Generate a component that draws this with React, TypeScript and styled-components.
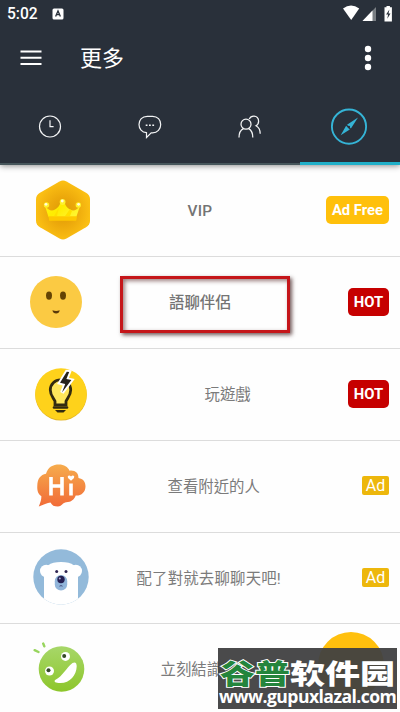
import React from 'react';
import styled, { createGlobalStyle } from 'styled-components';

const GlobalStyle = createGlobalStyle`
  * { box-sizing: border-box; }
  html, body { margin: 0; padding: 0; background: #fff; }
  body { font-family: Roboto, "Noto Sans CJK TC", sans-serif; overflow: hidden; }
  svg { display: block; }
`;

const Screen = styled.div`
  position: relative;
  width: 400px;
  height: 712px;
  overflow: hidden;
  display: flex;
  flex-direction: column;
  background: #fefefe;
`;

const Header = styled.header`
  flex: none;
  height: 165px;
  display: flex;
  flex-direction: column;
  background: #29303a;
  color: #fff;
  box-shadow: 0 1px 6px rgba(0, 0, 0, 0.45);
  z-index: 1;
`;

const StatusBar = styled.div`
  height: 28px;
  display: flex;
  align-items: center;
  padding: 0 6px 0 7px;
`;

const Time = styled.span`
  width: 45px;
  font-size: 15.6px;
  line-height: 28px;
  font-weight: 500;
`;

const StatusIcons = styled.div`
  margin-left: auto;
  display: flex;
`;

const Toolbar = styled.div`
  height: 61px;
  display: flex;
  align-items: center;
  padding: 0 28px 2px 20px;
`;

const Title = styled.h1`
  margin: -3px auto 0 38px;
  font: 400 22px/32px "Noto Sans CJK TC", sans-serif;
`;

const Tabs = styled.nav`
  flex: 1;
  display: grid;
  grid-template-columns: repeat(4, 1fr);
`;

const Tab = styled.button<{ $active?: boolean }>`
  border: 0;
  padding: ${p => (p.$active ? '2px 2px 0 0' : '1px 1px 0 0')};
  background: none;
  display: flex;
  align-items: center;
  justify-content: center;
  border-bottom: ${p => (p.$active ? '3px solid #20afc8' : '2px solid #46565b')};
`;

const List = styled.main`
  flex: 1;
`;

const Row = styled.div<{ $last?: boolean }>`
  height: ${p => (p.$last ? 91 : 92)}px;
  display: grid;
  grid-template-columns: 120px 1fr 90px;
  align-items: center;
  border-bottom: 1px solid #dcdcdc;
`;

const IconCell = styled.div<{ $inset: number; $lift?: number }>`
  padding-left: ${p => p.$inset}px;
  padding-bottom: ${p => p.$lift ?? 0}px;
`;

const Label = styled.span<{ $start: number; $bold?: boolean; $tracking?: number }>`
  padding-left: ${p => p.$start}px;
  padding-top: 1px;
  font-size: 15.4px;
  line-height: 24px;
  font-weight: ${p => (p.$bold ? 500 : 400)};
  letter-spacing: ${p => p.$tracking ?? 0}px;
  color: ${p => (p.$bold ? '#747474' : '#7b7b7b')};
  white-space: nowrap;
`;

const BadgeCell = styled.div`
  display: flex;
  justify-content: flex-end;
  padding-right: 11px;
`;

const Badge = styled.span<{ $tone: 'gold' | 'red' | 'ad' }>`
  height: ${p => (p.$tone === 'ad' ? 19 : 28)}px;
  width: ${p => ({ gold: 63, red: 41, ad: 27 })[p.$tone]}px;
  margin-bottom: 2px;
  display: flex;
  align-items: center;
  justify-content: center;
  border-radius: ${p => (p.$tone === 'ad' ? 2 : 5)}px;
  background: ${p => ({ gold: '#ffc00b', red: '#c60000', ad: '#edb70c' })[p.$tone]};
  color: #fff;
  font-size: ${p => (p.$tone === 'ad' ? 16 : 14.8)}px;
  font-weight: ${p => (p.$tone === 'ad' ? 400 : 700)};
  white-space: nowrap;
`;

const Highlight = styled.div`
  position: absolute;
  left: 120px;
  top: 276px;
  width: 170px;
  height: 57px;
  border: 3px solid #c5161a;
  box-shadow: 2px 2px 4px rgba(40, 0, 0, 0.65), inset 2px 2px 4px rgba(60, 0, 0, 0.5);
`;

const Fab = styled.div`
  position: absolute;
  left: 318px;
  top: 632px;
  width: 66px;
  height: 66px;
  border-radius: 50%;
  background: #ffc00e;
`;

const Watermark = styled.div`
  position: absolute;
  left: 218px;
  top: 648px;
  width: 179px;
  height: 61px;
  background: rgba(64, 64, 65, 0.95);
  color: #fff;
  z-index: 2;
`;

const Brand = styled.div`
  height: 38px;
  padding: 2px 0 0 2px;
  display: flex;
  font: 900 35px/36px "Noto Sans CJK SC", sans-serif;
  white-space: nowrap;
  transform: scaleY(0.79);
  transform-origin: 0 100%;
`;

const BrandGreen = styled.span`
  color: #24853c;
  -webkit-text-stroke: 2.4px #fff;
  paint-order: stroke fill;
`;

const BrandWhite = styled.span`
  color: #fff;
`;

const Url = styled.div`
  font: 700 17.6px/20px "Open Sans", sans-serif;
  padding-left: 1px;
  letter-spacing: -0.56px;
  white-space: nowrap;
`;

const KeyboardIcon = () => (
  <svg width="12" height="12" viewBox="0 0 12 12">
    <rect x="0.5" y="0.5" width="11" height="11" rx="1.5" fill="#fff" />
    <path d="M3.6 8.6 6 2.9l2.4 5.7M4.5 6.7h3" fill="none" stroke="#29303a" strokeWidth="1.3" />
  </svg>
);

const SystemIcons = () => (
  <svg width="52" height="18" viewBox="0 0 52 18">
    <path d="M1 3.5Q9-2.4 17.2 3.5L9.2 15Z" fill="#fff" />
    <path d="M20.5 16 34 2v14Z" fill="#797e83" />
    <path d="M20.5 16 30.5 5.5V16Z" fill="#fff" />
    <path d="M42.5 2.2h2V1h3.4v1.2h2V16.4h-7.4Z" fill="#fff" />
    <path d="m47.4 4.6-3.3 5h2l-.8 4.2 3.2-5.3h-2Z" fill="#29303a" />
  </svg>
);

const MenuIcon = () => (
  <svg width="22" height="18" viewBox="0 0 22 18" stroke="#fff" strokeWidth="1.9">
    <path d="M.5 2.5h21M.5 8.8h21M.5 15h21" />
  </svg>
);

const MoreIcon = () => (
  <svg width="8" height="26" viewBox="0 0 8 26" fill="#fff">
    <circle cx="4" cy="4" r="3.2" />
    <circle cx="4" cy="13" r="3.2" />
    <circle cx="4" cy="22" r="3.2" />
  </svg>
);

const ClockIcon = () => (
  <svg width="24" height="24" viewBox="0 0 24 24" fill="none" stroke="#f3f4f5" strokeWidth="1.2">
    <circle cx="12" cy="11.5" r="10.5" />
    <path d="M12 5.3v6.4h3.6" />
  </svg>
);

const ChatIcon = () => (
  <svg width="24" height="24" viewBox="0 0 24 24" fill="none" stroke="#f3f4f5" strokeWidth="1.2">
    <path d="M9.2 1.3h5.4c5 0 8.1 3.6 8.1 8.2s-3.3 8.3-8.1 8.3h-1.4L8.5 22.5v-4.8c-4.6-.2-7.5-3.8-7.5-8.2 0-4.6 3.2-8.2 8.2-8.2Z" />
    <path d="M7.7 10.3h1.8M11 10.3h1.8M14.3 10.3h1.8" strokeWidth="1.6" />
  </svg>
);

const PeopleIcon = () => (
  <svg width="24" height="24" viewBox="0 0 24 24" fill="none" stroke="#f3f4f5" strokeWidth="1.25">
    <circle cx="8" cy="9.2" r="5" />
    <path d="M1 22.5c0-4.8 1.2-7.3 4.4-8.9M10.7 13.6c3 1.7 4.1 4.3 4.1 8.9M11.2 4.1c1-2.2 2.3-3.1 4.4-3.1 3 0 5 2.2 5 5.2 0 2-.9 3.6-2.6 4.5 2.9 1.5 4.2 3.9 4.2 8" />
  </svg>
);

const CompassIcon = () => (
  <svg width="38" height="38" viewBox="0 0 38 38">
    <circle cx="19" cy="18.6" r="17.1" fill="none" stroke="#35b4d6" strokeWidth="1.9" />
    <path d="M28 9.4 20.9 20.6 17 16.8ZM10.7 27.2 16.1 17.7 19.8 21.4Z" fill="#35b4d6" />
    <circle cx="18.9" cy="19" r="1.2" fill="#29303a" />
  </svg>
);

const VipIcon = () => (
  <svg width="54" height="60" viewBox="0 0 54 60">
    <defs>
      <radialGradient id="hex" cx=".5" cy=".52" r=".5">
        <stop offset="0" stopColor="#dc9b04" />
        <stop offset=".45" stopColor="#eba70b" />
        <stop offset="1" stopColor="#fbbf13" />
      </radialGradient>
      <linearGradient id="crown" x2="1" y2=".5">
        <stop offset="0" stopColor="#fff316" />
        <stop offset=".5" stopColor="#ffec00" />
        <stop offset="1" stopColor="#fff42c" />
      </linearGradient>
    </defs>
    <path d="M23.5 1.5q3.5-2 7 0l19.5 11.2q4 2.4 4 6.5v21.6q0 4.1-4 6.5L30.5 58.5q-3.5 2-7 0L4 47.3q-4-2.4-4-6.5V19.2q0-4.1 4-6.5Z" fill="url(#hex)" />
    <path d="M9 26q5 6.5 10 3.5 4-2 5.5-7h4q1.5 5 5.5 7 5 3 10-3.5l-3.7 11H12.5Z" fill="url(#crown)" />
    <path d="M12.5 36.2h28.6l-.9 4.6H13.2Z" fill="#ffc800" />
    <path d="m18 36 4-7 1-2-2 9ZM29 36l5-7 2 2-2 5Z" fill="#ffe000" />
    <g fill="#fff02b"><circle cx="10.5" cy="25" r="2.7" /><circle cx="26.6" cy="22" r="2.9" /><circle cx="42.3" cy="25" r="2.7" /></g>
    <g fill="#fffce0"><circle cx="10" cy="24.3" r="1.4" /><circle cx="26.3" cy="21" r="1.4" /><circle cx="42.6" cy="24.3" r="1.4" /></g>
  </svg>
);

const SmileIcon = () => (
  <svg width="52" height="52" viewBox="0 0 52 52">
    <circle cx="26" cy="26" r="26" fill="#fbca43" />
    <ellipse cx="19" cy="19.6" rx="3" ry="4.2" fill="#644304" />
    <ellipse cx="33" cy="19.6" rx="3" ry="4.2" fill="#644304" />
    <path d="M22.4 34.2q3.8 1.4 7.3 0-.6 3.2-3.6 3.2t-3.7-3.2Z" fill="#59390a" />
  </svg>
);

const BulbIcon = () => (
  <svg width="52" height="53" viewBox="0 0 52 53">
    <circle cx="26" cy="26.8" r="25.8" fill="#e3b525" />
    <circle cx="26" cy="26" r="25.8" fill="#fed21b" />
    <path d="M20 36.8v-3.5c-1-3-4.7-5.3-4.7-11.3 0-6 4.7-10.2 10.2-10.2S35.7 16 35.7 22c0 6-3.7 8.3-4.7 11.3v3.5Z" fill="#ffe75b" stroke="#332b10" strokeWidth="2.8" />
    <path d="M19 39.5h13" stroke="#332b10" strokeWidth="2.6" strokeLinecap="round" />
    <path d="M20 42h11l-2.5 2.4h-6Z" fill="#332b10" />
    <path d="m31.8 3.8-6.8 11 5.2 1.3-3.2 8.5 9.4-12.5-5-1.1 2.8-7Z" fill="#26231c" stroke="#fff" strokeWidth="3.8" paintOrder="stroke" />
  </svg>
);

const HiIcon = () => (
  <svg width="49" height="43" viewBox="0 0 49 43">
    <defs>
      <linearGradient id="hi" x2="0" y2="1">
        <stop offset="0" stopColor="#f6ac4d" /><stop offset="1" stopColor="#f16b37" />
      </linearGradient>
    </defs>
    <path d="M9 9.8C11 3 16 .5 22 .5c5 0 9 2.4 10.5 6.2 5.6-.8 9 2.4 9 7.2 4.7.8 7 4 7 8.3 0 6-4.2 9.6-9.8 9.3-1.5 4-4.6 6.7-9.5 6.7-3 0-5 4.3-8.2 4.3-4 0-6-1.2-7.5-4.1C10.5 38.6 6 41 1.8 42.5c1.8-4 2.5-7 2.6-10.2C.8 29.8 0 26 .3 21.8.5 14.5 3.5 11 9 9.8Z" fill="url(#hi)" />
    <path d="M14 13v18.5M25 13v18.5M14 22h11M34 19.5v12" fill="none" stroke="#fff" strokeWidth="3.6" />
    <path d="m34 16.7-3-2.8q-.9-2 .9-2.4 1.3-.2 2.1 1 .9-1.2 2.1-1 1.8.4.9 2.4Z" fill="#fff" />
  </svg>
);

const BearIcon = () => (
  <svg width="56" height="56" viewBox="0 0 56 56">
    <defs><clipPath id="bearClip"><circle cx="28" cy="28" r="27.7" /></clipPath></defs>
    <g clipPath="url(#bearClip)">
      <path d="M0 0h56v56H0Z" fill="#93bada" />
      <circle cx="13.2" cy="22" r="6.2" fill="#fff" />
      <circle cx="42.8" cy="22" r="6.2" fill="#fff" />
      <path d="M11 56V26q0-13 17-13t17 13v30Z" fill="#fff" />
    </g>
    <rect x="21.8" y="26" width="12.4" height="15.6" rx="6.2" fill="#91b5da" />
    <circle cx="28" cy="30.5" r="3.7" fill="#252052" />
    <circle cx="26.8" cy="29.5" r="1" fill="#b3afd7" />
    <circle cx="23.7" cy="22.4" r="1.5" fill="#302653" /><circle cx="33" cy="22.4" r="1.5" fill="#302653" />
    <path d="M26.5 37.2q1.5-1.2 3 0" stroke="#454c7d" fill="none" />
  </svg>
);

const MonsterIcon = () => (
  <svg width="52" height="50" viewBox="0 0 52 50">
    <defs>
      <linearGradient id="monster" x2="0" y2="1">
        <stop offset="0" stopColor="#a7d769" /><stop offset="1" stopColor="#8dc62b" />
      </linearGradient>
    </defs>
    <circle cx="28.5" cy="27" r="22.8" fill="url(#monster)" />
    <path d="M1.6 8.2 5.5 10M10.2 1.5l1.1 2.8" stroke="#98d55d" strokeWidth="2.4" strokeLinecap="round" />
    <circle cx="32.5" cy="14.4" r="4.5" fill="#fff" /><circle cx="16.5" cy="29" r="4.5" fill="#fff" />
    <circle cx="31.2" cy="14" r="2" fill="#344927" /><circle cx="15.5" cy="28.2" r="2" fill="#344927" />
    <path d="M22.5 37.7C29.5 34.5 33 26 39.5 21c2.7-1.6 4.3 0 4.2 3.6C43.3 34 36.5 42 25.5 41c-4-.5-4.8-2-3-3.3Z" fill="#fff" />
  </svg>
);

type RowData = {
  icon: React.ReactNode;
  inset: number;
  lift?: number;
  label: string;
  start: number;
  bold?: boolean;
  tracking?: number;
  badge?: { text: string; tone: 'gold' | 'red' | 'ad' };
};

const rows: RowData[] = [
  { icon: <VipIcon />, inset: 36, lift: 1, label: 'VIP', start: 67.5, bold: true, tracking: 0.2, badge: { text: 'Ad Free', tone: 'gold' } },
  { icon: <SmileIcon />, inset: 30, lift: 1, label: '語聊伴侶', start: 49, bold: true, badge: { text: 'HOT', tone: 'red' } },
  { icon: <BulbIcon />, inset: 35, label: '玩遊戲', start: 84.5, badge: { text: 'HOT', tone: 'red' } },
  { icon: <HiIcon />, inset: 36.5, lift: 2, label: '查看附近的人', start: 47.5, badge: { text: 'Ad', tone: 'ad' } },
  { icon: <BearIcon />, inset: 33, lift: 2, label: '配了對就去聊聊天吧!', start: 16.5, tracking: 0.2, badge: { text: 'Ad', tone: 'ad' } },
  { icon: <MonsterIcon />, inset: 33, lift: 5, label: '立刻結識新朋友', start: 40.5 },
];

export default function App() {
  return (
    <Screen>
      <GlobalStyle />
      <Header>
        <StatusBar>
          <Time>5:02</Time>
          <KeyboardIcon />
          <StatusIcons><SystemIcons /></StatusIcons>
        </StatusBar>
        <Toolbar>
          <MenuIcon />
          <Title>更多</Title>
          <MoreIcon />
        </Toolbar>
        <Tabs>
          <Tab aria-label="Recent"><ClockIcon /></Tab>
          <Tab aria-label="Chats"><ChatIcon /></Tab>
          <Tab aria-label="Friends"><PeopleIcon /></Tab>
          <Tab aria-label="More" $active><CompassIcon /></Tab>
        </Tabs>
      </Header>
      <List>
        {rows.map((row, i) => (
          <Row key={row.label} $last={i >= 4}>
            <IconCell $inset={row.inset} $lift={row.lift}>{row.icon}</IconCell>
            <Label $start={row.start} $bold={row.bold} $tracking={row.tracking}>{row.label}</Label>
            <BadgeCell>{row.badge && <Badge $tone={row.badge.tone}>{row.badge.text}</Badge>}</BadgeCell>
          </Row>
        ))}
      </List>
      <Highlight />
      <Fab />
      <Watermark>
        <Brand>
          <BrandGreen>谷普</BrandGreen>
          <BrandWhite>软件园</BrandWhite>
        </Brand>
        <Url>www.gupuxlazal.com</Url>
      </Watermark>
    </Screen>
  );
}
